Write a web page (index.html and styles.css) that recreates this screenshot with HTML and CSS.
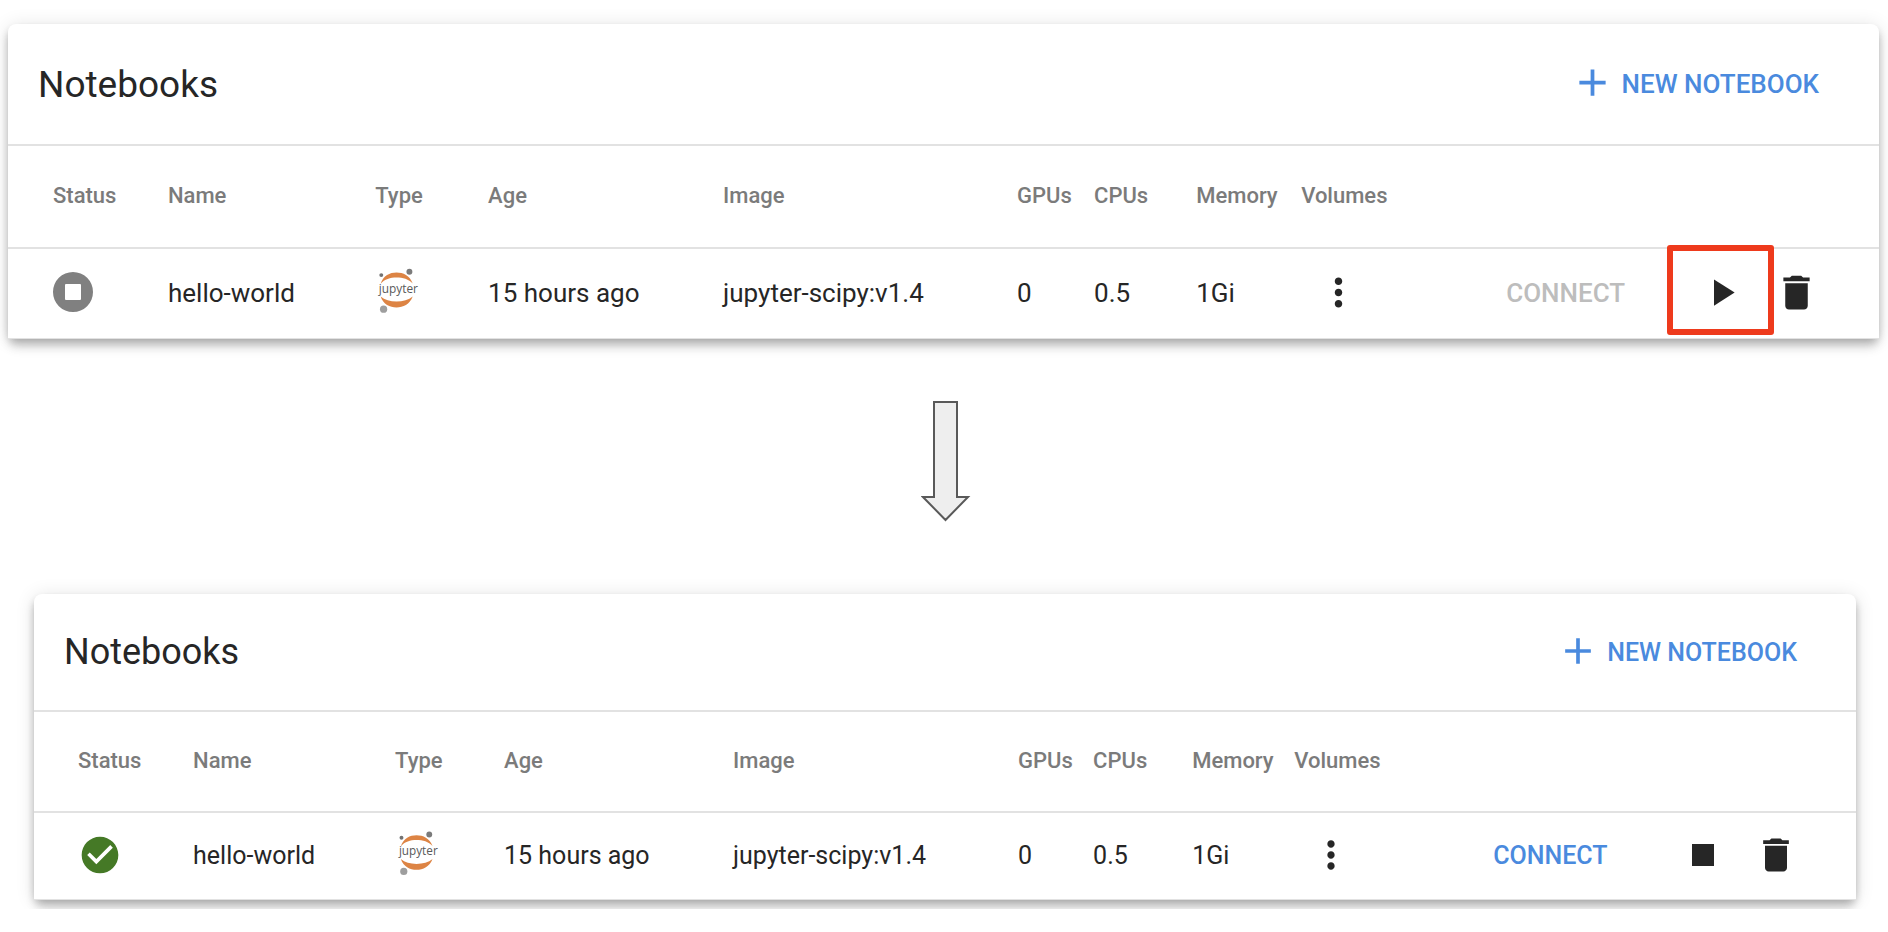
FILE: index.html
```html
<!DOCTYPE html>
<html lang="en">
<head>
<meta charset="utf-8">
<title>Notebooks</title>
<link rel="stylesheet" href="styles.css">
</head>
<body>
<svg class="defs" aria-hidden="true">
  <symbol id="plus" viewBox="0 0 24 24"><path d="M19 13h-6v6h-2v-6H5v-2h6V5h2v6h6z"/></symbol>
  <symbol id="trash" viewBox="0 0 24 24"><path d="M6 19c0 1.100.9 2 2 2h8c1.100 0 2-.9 2-2V7H6v12zM19 4h-3.500l-1-1h-5l-1 1H5v2h14V4z"/></symbol>
  <symbol id="dots" viewBox="0 0 24 24"><path d="M12 8c1.100 0 2-.9 2-2s-.9-2-2-2-2 .9-2 2 .9 2 2 2zm0 2c-1.100 0-2 .9-2 2s.9 2 2 2 2-.9 2-2-.9-2-2-2zm0 6c-1.100 0-2 .9-2 2s.9 2 2 2 2-.9 2-2-.9-2-2-2z"/></symbol>
  <symbol id="play" viewBox="0 0 24 24"><path d="M8 5v14l11-7z"/></symbol>
  <symbol id="stop" viewBox="0 0 24 24"><path d="M6 6h12v12H6z"/></symbol>
  <symbol id="stopped" viewBox="0 0 24 24"><path fill-rule="evenodd" d="M12 2a10 10 0 1 0 0 20 10 10 0 0 0 0-20zM8.500 8h7a.5.5 0 0 1 .5.5v7a.5.5 0 0 1-.5.5h-7a.5.5 0 0 1-.5-.5v-7a.5.5 0 0 1 .5-.5z"/></symbol>
  <symbol id="ready" viewBox="0 0 24 24"><path d="M12 2C6.480 2 2 6.480 2 12s4.480 10 10 10 10-4.480 10-10S17.520 2 12 2zm-2 15l-5-5 1.410-1.410L10 14.170l7.590-7.590L19 8l-9 9z"/></symbol>
  <symbol id="planet" viewBox="0 0 130 150">
    <path fill="#dd8444" d="M14 53C22 28 42 19 62 19s40 9 49 33C99 39 81 34 62 34S26 39 14 53zM14 92c12 10 29 15 48 15s37-5 49-15c-9 24-29 33-49 33S22 116 14 92z"/>
    <circle cx="16" cy="27" r="6" fill="#737373"/>
    <circle cx="101" cy="17" r="9" fill="#7b7b7b"/>
    <circle cx="23" cy="130" r="11" fill="#9e9e9e"/>
  </symbol>
</svg>

<main class="page">
  <div class="stage">
    <section class="card card-stopped">
      <header class="card-head">
        <h2 class="title">Notebooks</h2>
        <button class="btn btn-new" type="button"><svg class="icon"><use href="#plus"/></svg>NEW NOTEBOOK</button>
      </header>
      <table class="grid">
        <colgroup><col class="c-status"><col class="c-name"><col class="c-type"><col class="c-age"><col class="c-image"><col class="c-gpu"><col class="c-cpu"><col class="c-mem"><col class="c-vol"><col class="c-connect"><col class="c-run"><col></colgroup>
        <thead>
          <tr><th>Status</th><th>Name</th><th>Type</th><th>Age</th><th>Image</th><th>GPUs</th><th>CPUs</th><th>Memory</th><th>Volumes</th><td></td><td></td><td></td></tr>
        </thead>
        <tbody>
          <tr>
            <td><svg class="state" role="img" aria-label="Stopped"><use href="#stopped"/></svg></td>
            <td>hello-world</td>
            <td><svg class="logo" viewBox="0 0 130 150"><use href="#planet"/><text class="logo-word" x="8" y="81">jupyter</text></svg></td>
            <td>15 hours ago</td>
            <td>jupyter-scipy:v1.4</td>
            <td>0</td>
            <td>0.5</td>
            <td>1Gi</td>
            <td><button class="btn btn-menu" type="button" aria-label="Volumes"><svg class="icon"><use href="#dots"/></svg></button></td>
            <td><button class="btn" type="button" disabled>CONNECT</button></td>
            <td class="run"><button class="btn" type="button" aria-label="Start"><svg class="icon"><use href="#play"/></svg></button><span class="highlight"></span></td>
            <td><button class="btn" type="button" aria-label="Delete"><svg class="icon"><use href="#trash"/></svg></button></td>
          </tr>
        </tbody>
      </table>
    </section>
  </div>

  <svg class="arrow" viewBox="0 0 50 122"><path d="M13 2h23v95h11L24.500 120 2 97h11z"/></svg>

  <div class="stage stage-after">
    <section class="card card-ready">
      <header class="card-head">
        <h2 class="title">Notebooks</h2>
        <button class="btn btn-new" type="button"><svg class="icon"><use href="#plus"/></svg>NEW NOTEBOOK</button>
      </header>
      <table class="grid">
        <colgroup><col class="c-status"><col class="c-name"><col class="c-type"><col class="c-age"><col class="c-image"><col class="c-gpu"><col class="c-cpu"><col class="c-mem"><col class="c-vol"><col class="c-connect"><col class="c-run"><col></colgroup>
        <thead>
          <tr><th>Status</th><th>Name</th><th>Type</th><th>Age</th><th>Image</th><th>GPUs</th><th>CPUs</th><th>Memory</th><th>Volumes</th><td></td><td></td><td></td></tr>
        </thead>
        <tbody>
          <tr>
            <td><svg class="state" role="img" aria-label="Running"><use href="#ready"/></svg></td>
            <td>hello-world</td>
            <td><svg class="logo" viewBox="0 0 130 150"><use href="#planet"/><text class="logo-word" x="8" y="81">jupyter</text></svg></td>
            <td>15 hours ago</td>
            <td>jupyter-scipy:v1.4</td>
            <td>0</td>
            <td>0.5</td>
            <td>1Gi</td>
            <td><button class="btn btn-menu" type="button" aria-label="Volumes"><svg class="icon"><use href="#dots"/></svg></button></td>
            <td><button class="btn btn-link" type="button">CONNECT</button></td>
            <td class="run"><button class="btn" type="button" aria-label="Stop"><svg class="icon"><use href="#stop"/></svg></button></td>
            <td><button class="btn" type="button" aria-label="Delete"><svg class="icon"><use href="#trash"/></svg></button></td>
          </tr>
        </tbody>
      </table>
    </section>
  </div>
</main>
</body>
</html>
```
FILE: styles.css
```css
* { box-sizing: border-box; }

body {
  margin: 0;
  background: #fff;
  color: #262626;
  font-family: Roboto, "Liberation Sans", sans-serif;
}

.defs { position: absolute; width: 0; height: 0; }

.page { display: flex; flex-direction: column; }

.stage { padding: 24px 9px 24px 8px; }
.stage-after { padding: 24px 32px 9px 34px; overflow: hidden; }

.card {
  border-radius: 8px;
  background: #fff;
  box-shadow:
    0 4px 8px -2px rgba(0, 0, 0, .2),
    0 8px 10px 0 rgba(0, 0, 0, .14),
    0 2px 19px 0 rgba(0, 0, 0, .12);
}

.card-stopped {
  --title: 37px;
  --text: 26px;
  --label: 22px;
  --icon: 45px;
  --state: 48px;
  --logo: 50px;
  --head-h: 120px;
  --label-h: 103px;
  --row-h: 92px;
  --start: 45px;
  --end: 60px;
}

.card-ready {
  --title: 36px;
  --text: 25px;
  --label: 22px;
  --icon: 44px;
  --state: 44px;
  --logo: 49px;
  --head-h: 116px;
  --label-h: 101px;
  --row-h: 89px;
  --start: 44px;
  --end: 59px;
}

.card-head {
  display: flex;
  align-items: center;
  justify-content: space-between;
  height: var(--head-h);
  padding: 0 var(--end) 0 30px;
}

.title { margin: 0; font-size: var(--title); font-weight: 400; }

.btn {
  display: flex;
  align-items: center;
  padding: 0;
  border: 0;
  background: none;
  color: inherit;
  font: 500 var(--text) Roboto, "Liberation Sans", sans-serif;
}
.btn:disabled { color: #bdbdbd; }
.btn-new, .btn-link { color: #4a8ade; }
.btn-new { gap: 7px; }
.btn-new .icon { margin-bottom: 3px; }
.btn-menu { margin-left: 15px; }

.icon { width: var(--icon); height: var(--icon); fill: currentColor; }
.state { width: var(--state); height: var(--state); margin: 0 0 2px -4px; fill: #808080; }
.card-ready .state { margin: 0; fill: #457926; }
.logo { width: 43px; height: var(--logo); margin: 0 0 4px 1px; }
.logo-word { font: 36px "Open Sans", sans-serif; fill: #5a5a5a; }

.icon, .state, .logo { display: block; flex: none; }

.grid {
  width: 100%;
  table-layout: fixed;
  border-collapse: separate;
  border-spacing: 0;
  font-size: var(--text);
}
.grid th, .grid td {
  padding: 0 0 2px;
  border-top: 2px solid #e2e2e2;
  background: #fff;
  text-align: left;
  vertical-align: middle;
  white-space: nowrap;
}
.grid th { color: #7b7b7b; font-size: var(--label); font-weight: 500; }
.grid th:first-child, .grid tbody td:first-child { padding-left: var(--start); }
.grid thead tr { height: var(--label-h); }
.grid tbody tr { height: var(--row-h); }
.grid tbody td { border-bottom: 1px solid #e2e2e2; }

.card-stopped .c-status { width: 8.55%; }
.card-stopped .c-name { width: 11.08%; }
.card-stopped .c-type { width: 6.03%; }
.card-stopped .c-age { width: 12.56%; }
.card-stopped .c-image { width: 15.71%; }
.card-stopped .c-gpu { width: 4.12%; }
.card-stopped .c-cpu { width: 5.46%; }
.card-stopped .c-mem { width: 5.61%; }
.card-stopped .c-vol { width: 10.96%; }
.card-stopped .c-connect { width: 8.6%; }
.card-stopped .c-run { width: 5.72%; }

.card-ready .c-status { width: 8.73%; }
.card-ready .c-name { width: 11.09%; }
.card-ready .c-type { width: 5.98%; }
.card-ready .c-age { width: 12.57%; }
.card-ready .c-image { width: 15.64%; }
.card-ready .c-gpu { width: 4.12%; }
.card-ready .c-cpu { width: 5.44%; }
.card-ready .c-mem { width: 5.6%; }
.card-ready .c-vol { width: 10.92%; }
.card-ready .c-connect { width: 8.62%; }
.card-ready .c-run { width: 5.71%; }

.grid .run { position: relative; padding-left: 2px; }
.run .btn { margin: 0 auto; }
.highlight {
  position: absolute;
  inset: -4px 0 3px;
  border: 6px solid #ee3a1c;
  border-radius: 3px;
  pointer-events: none;
}

.arrow {
  align-self: center;
  width: 50px;
  height: 122px;
  margin: 37px 0 48px 4px;
  fill: #eee;
  stroke: #595959;
  stroke-width: 2px;
}
```
